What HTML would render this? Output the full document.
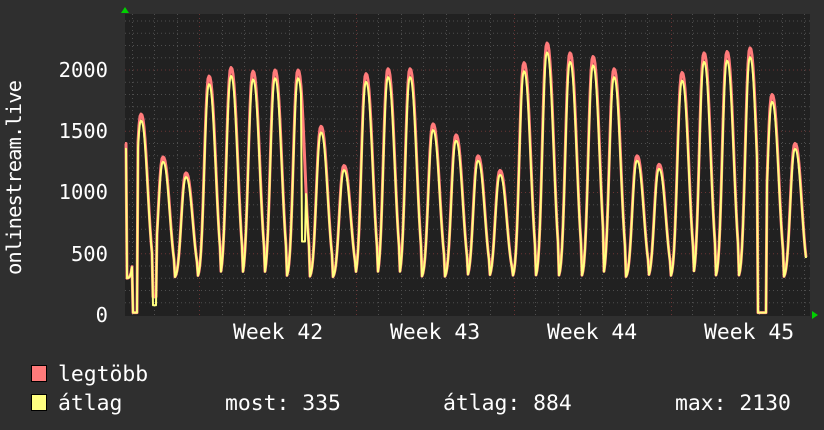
<!DOCTYPE html>
<html><head><meta charset="utf-8"><style>
html,body{margin:0;padding:0;background:#2f2f2f;width:824px;height:430px;overflow:hidden}
svg text{font-family:"DejaVu Sans Mono","Liberation Mono",monospace;fill:#fff}
</style></head><body>
<svg id="g" width="824" height="430" xmlns="http://www.w3.org/2000/svg">
<rect x="0" y="0" width="824" height="430" fill="#2f2f2f"/>
<rect x="125" y="14" width="685" height="302" fill="#212121"/>
<g id="grid"></g>
<polyline id="red" fill="none" stroke="#ff7a7a" stroke-width="3" stroke-linejoin="round"/>
<polyline id="yel" fill="none" stroke="#ffff80" stroke-width="2" stroke-linejoin="round"/>
<polygon points="121,13 125,7 129,13" fill="#00d000"/>
<polygon points="812,311 818,315 812,319" fill="#00d000"/>
<text x="108" y="77" font-size="20.5" text-anchor="end">2000</text>
<text x="108" y="138" font-size="20.5" text-anchor="end">1500</text>
<text x="108" y="199" font-size="20.5" text-anchor="end">1000</text>
<text x="108" y="261" font-size="20.5" text-anchor="end">500</text>
<text x="108" y="322" font-size="20.5" text-anchor="end">0</text>
<text transform="translate(21,275) rotate(-90)" textLength="195" font-size="20.5">onlinestream.live</text>
<text x="233" y="339" font-size="21.4">Week 42</text>
<text x="390" y="339" font-size="21.4">Week 43</text>
<text x="547" y="339" font-size="21.4">Week 44</text>
<text x="704" y="339" font-size="21.4">Week 45</text>
<rect x="31.5" y="365.5" width="15" height="16" fill="#ff7a7a" stroke="#000"/>
<rect x="31.5" y="394.5" width="15" height="16" fill="#ffff80" stroke="#000"/>
<text x="58" y="381" font-size="21.4">legtöbb</text>
<text x="58" y="410" font-size="21.4">átlag</text>
<text x="225" y="410" font-size="21.4">most: 335</text>
<text x="443" y="410" font-size="21.4">átlag: 884</text>
<text x="675" y="410" font-size="21.4">max: 2130</text>
</svg>
<script>
(function(){
var g=document.getElementById('grid'),s='';
function Y(v){return 315-v*0.1225;}
for(var v=100;v<=2400;v+=100){var y=Y(v);var maj=(v%500==0);
s+='<line x1="125" x2="810" y1="'+y+'" y2="'+y+'" stroke="'+(maj?'#6a3434':'#4e4e4e')+'" stroke-dasharray="1,3"/>';}
var M=[199,356,514,671];
for(var x=132;x<810;x+=22.4){var xx=Math.round(x)+0.5;var m=M.find(function(m){return Math.abs(m-xx)<6});
var X=m?m+0.5:xx;
s+='<line y1="14" y2="316" x1="'+X+'" x2="'+X+'" stroke="'+(m?'#6a3434':'#4e4e4e')+'" stroke-dasharray="1,3"/>';}
g.innerHTML=s;
var peaks=[[141,1640],[163,1290],[186,1160],[209,1950],[231,2020],[253,1990],[275,2000],[298,2000],[321,1540],[344,1220],[366,1970],[388,2010],[410,2010],[433,1560],[456,1470],[478,1300],[500,1180],[524,2060],[547,2220],[570,2140],[593,2110],[614,2010],[637,1300],[659,1230],[682,1980],[704,2140],[727,2150],[750,2180],[772,1800],[795,1400]];
var r=[],yl=[];
for(var x=125;x<=806;x+=1){
 var best=null,d=1e9;for(var i=0;i<peaks.length;i++){var dd=x-peaks[i][0];if(Math.abs(dd)<Math.abs(d)){d=dd;best=peaks[i];}}
 var w=d<0?6:8.5;var f=Math.exp(-Math.pow(Math.abs(d)/w,2.4));
 var tr=300;var v=tr+(best[1]-tr)*f;
 if(x<=126)v=1400;
 var va=tr+(v-tr)*0.96;
 if(x>=133&&x<=137){v=va=20;}
 if(x>=153&&x<=156){va=80;v=150;}
 if(x>=758&&x<=766){v=va=20;}
 if(x>=302&&x<=305){va=600;}
 r.push(x+','+Y(v).toFixed(1));yl.push(x+','+Y(va).toFixed(1));
}
document.getElementById('red').setAttribute('points',r.join(' '));
document.getElementById('yel').setAttribute('points',yl.join(' '));
})();
</script>
</body></html>
